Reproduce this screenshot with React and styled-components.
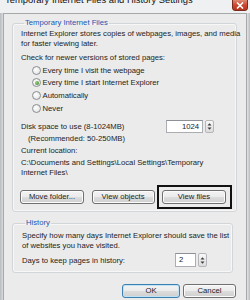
import React from "react";
import styled, { createGlobalStyle } from "styled-components";

const Global = createGlobalStyle`
  html, body { margin: 0; padding: 0; background: #ececec; }
  body { font-family: "Liberation Sans", Arial, sans-serif; color: #1c1c1c; }
  * { box-sizing: border-box; }
`;

const FS = 7.7;

const Window = styled.div`
  width: 250px;
  height: 300px;
  overflow: hidden;
  display: flex;
  flex-direction: column;
  background: linear-gradient(90deg, #b9bcc0 0, #d8dadc 3px, #e4e4e4 247px, #b9bcc0 250px);
  padding: 0 3px;
`;

const TitleBar = styled.div`
  height: 13px;
  display: flex;
  align-items: flex-start;
  background: #eef0f1;
  margin: 0 -3px;
  padding: 0 2px 0 2px;
`;

const TitleText = styled.div`
  flex: 1;
  margin-top: -5px;
  font-size: 9.4px;
  line-height: 10px;
  color: #111;
  white-space: nowrap;
  padding-left: 3px;
`;

const CloseBtn = styled.div`
  width: 16px;
  height: 14px;
  margin-top: -3px;
  border-radius: 0 0 3px 3px;
  border: 1px solid #7a2a1f;
  background: linear-gradient(#e9a392, #cd4a32 55%, #b8321c);
  display: flex;
  align-items: center;
  justify-content: center;
  padding-top: 2px;
`;

const Client = styled.div`
  flex: 1;
  background: #ebebeb;
  border: 1px solid #a6a8aa;
  border-bottom: none;
  padding: 4px 9px 0 8px;
  display: flex;
  flex-direction: column;
  font-size: ${FS}px;
`;

const Group = styled.fieldset`
  margin: 0;
  margin-right: ${(p) => p.$inset || 0}px;
  margin-top: ${(p) => p.$top || 0}px;
  border: 1px solid #d3d6d8;
  border-radius: 3px;
  padding: ${(p) => p.$pad};
  min-width: 0;
  box-shadow: inset 0 0 0 1px #f7f7f7;
`;

const Legend = styled.legend`
  color: #2256b0;
  font-size: ${FS}px;
  line-height: 10px;
  padding: 0 1px;
  margin-left: 3px;
`;

const Para = styled.div`
  line-height: ${(p) => p.$lh || 10}px;
  margin-top: ${(p) => p.$top || 0}px;
  padding-left: ${(p) => p.$indent || 0}px;
  white-space: nowrap;
`;

const RadioList = styled.div`
  display: flex;
  flex-direction: column;
  gap: 0.7px;
  margin-top: 1px;
  padding-left: 11px;
`;

const RadioRow = styled.label`
  height: 12px;
  display: flex;
  align-items: center;
  gap: 1.5px;
`;

const RadioCircle = styled.span`
  width: 9px;
  height: 9px;
  border-radius: 50%;
  border: 1px solid #8a8d90;
  background: radial-gradient(circle at 40% 40%, #ffffff, #dcdedf);
  display: flex;
  align-items: center;
  justify-content: center;
  &::after {
    content: "";
    width: 4px;
    height: 4px;
    border-radius: 50%;
    background: ${(p) => (p.$on ? "radial-gradient(circle at 35% 35%, #9ad07f, #2e7a26)" : "transparent")};
  }
`;

const SpinRow = styled.div`
  display: flex;
  align-items: ${(p) => p.$align || "flex-start"};
  margin-top: ${(p) => p.$top || 0}px;
`;

const Spinner = styled.div`
  margin-left: auto;
  margin-right: ${(p) => p.$right}px;
  margin-top: ${(p) => p.$mt || 0}px;
  display: flex;
  align-items: center;
  gap: 2px;
`;

const SpinInput = styled.div`
  width: ${(p) => p.$w}px;
  height: ${(p) => p.$h}px;
  background: #fff;
  border: 1px solid #abadb3;
  border-top-color: #8d9196;
  font-size: ${FS}px;
  line-height: ${(p) => p.$h - 2}px;
  text-align: ${(p) => p.$align};
  padding: 0 3px;
`;

const SpinArrows = styled.div`
  width: 9px;
  height: ${(p) => p.$h}px;
  border: 1px solid #b4b6b9;
  border-radius: 2px;
  background: linear-gradient(#f8f8f8, #dcdcdc);
  display: flex;
  flex-direction: column;
  align-items: center;
  justify-content: center;
`;

const ButtonRow = styled.div`
  display: flex;
  gap: ${(p) => p.$gap}px;
  margin-top: ${(p) => p.$top}px;
  margin-left: ${(p) => p.$left || 0}px;
  justify-content: ${(p) => p.$justify || "flex-start"};
  margin-right: ${(p) => p.$right || 0}px;
`;

const Button = styled.button`
  width: ${(p) => p.$w}px;
  height: 14px;
  padding: 0;
  font-family: "Liberation Sans", Arial, sans-serif;
  font-size: ${FS}px;
  line-height: 12px;
  color: #1c1c1c;
  border: 1px solid ${(p) => (p.$default ? "#3c7fb1" : "#707070")};
  border-radius: 3px;
  background: linear-gradient(#f4f4f4 0, #ebebeb 50%, #dddddd 51%, #cfcfcf 100%);
  box-shadow: inset 0 0 0 1px ${(p) => (p.$default ? "#bfe3f5" : "#fbfbfb")};
  outline: none;
`;

const FocusFrame = styled.span`
  display: flex;
  margin: -5px -6px -5px -5px;
  padding: 3px 4px 3px 3px;
  border: 2px solid #111;
`;

const Radio = ({ on, children }) => (
  <RadioRow>
    <RadioCircle $on={on} />
    <span>{children}</span>
  </RadioRow>
);

const Arrows = ({ h }) => (
  <SpinArrows $h={h}>
    <svg width="5" height="9" viewBox="0 0 5 9">
      <path d="M0.5 3.5 L2.5 1.2 L4.5 3.5 Z" fill="#3a3a3a" />
      <path d="M0.5 5.5 L2.5 7.8 L4.5 5.5 Z" fill="#3a3a3a" />
    </svg>
  </SpinArrows>
);

export default function App() {
  return (
    <>
      <Global />
      <Window>
        <TitleBar>
          <TitleText>Temporary Internet Files and History Settings</TitleText>
          <CloseBtn>
            <svg width="8" height="7" viewBox="0 0 8 7">
              <path d="M1 0.5 L7 6.5 M7 0.5 L1 6.5" stroke="#fff" strokeWidth="1.6" />
            </svg>
          </CloseBtn>
        </TitleBar>
        <Client>
          <Group $pad="1px 8px 7px 8px">
            <Legend>Temporary Internet Files</Legend>
            <Para>
              Internet Explorer stores copies of webpages, images, and media
              <br />
              for faster viewing later.
            </Para>
            <Para $top={4}>Check for newer versions of stored pages:</Para>
            <RadioList>
              <Radio>Every time I visit the webpage</Radio>
              <Radio on>Every time I start Internet Explorer</Radio>
              <Radio>Automatically</Radio>
              <Radio>Never</Radio>
            </RadioList>
            <SpinRow $top={7}>
              <div>
                <Para $lh={12}>Disk space to use (8-1024MB)</Para>
                <Para $lh={12} $indent={7}>(Recommended: 50-250MB)</Para>
              </div>
              <Spinner $right={14} $mt={-1}>
                <SpinInput $w={37} $h={13} $align="right">1024</SpinInput>
                <Arrows h={13} />
              </Spinner>
            </SpinRow>
            <Para $top={1}>Current location:</Para>
            <Para $top={2} $lh={9.5}>
              C:\Documents and Settings\Local Settings\Temporary
              <br />
              Internet Files\
            </Para>
            <ButtonRow $gap={7.5} $top={13} $left={-1}>
              <Button $w={64}>Move folder...</Button>
              <Button $w={63}>View objects</Button>
              <FocusFrame>
                <Button $w={64}>View files</Button>
              </FocusFrame>
            </ButtonRow>
          </Group>
          <Group $pad="3px 9px 5px 9px" $top={6} $inset={4}>
            <Legend>History</Legend>
            <Para $lh={9.5}>
              Specify how many days Internet Explorer should save the list
              <br />
              of websites you have visited.
            </Para>
            <SpinRow $top={3} $align="center">
              <span>Days to keep pages in history:</span>
              <Spinner $right={16}>
                <SpinInput $w={21} $h={14} $align="left">2</SpinInput>
                <Arrows h={14} />
              </Spinner>
            </SpinRow>
          </Group>
          <ButtonRow $gap={3} $top={11} $justify="flex-end" $right={1}>
            <Button $w={58} $default>OK</Button>
            <Button $w={53}>Cancel</Button>
          </ButtonRow>
        </Client>
      </Window>
    </>
  );
}
